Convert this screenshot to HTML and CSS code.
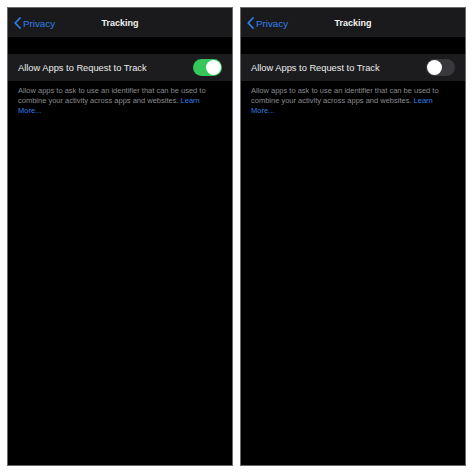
FILE: index.html
```html
<!DOCTYPE html>
<html>
<head>
<meta charset="utf-8">
<link rel="stylesheet" href="styles.css">
</head>
<body>
<div class="wrap">
  <div class="phone">
    <div class="nav">
      <div class="back">
        <svg class="chev" width="7" height="12" viewBox="0 0 7 12"><path d="M6 1 L1.2 6 L6 11" fill="none" stroke="#2f7fe6" stroke-width="1.8" stroke-linecap="round" stroke-linejoin="round"/></svg>
        <span>Privacy</span>
      </div>
      <div class="title">Tracking</div>
    </div>
    <div class="gap"></div>
    <div class="row">
      <span class="label">Allow Apps to Request to Track</span>
      <span class="toggle on"><span class="knob"></span></span>
    </div>
    <div class="footer">Allow apps to ask to use an identifier that can be used to combine your activity across apps and websites. <span class="link">Learn</span> <span class="link">More...</span></div>
  </div>
  <div class="phone">
    <div class="nav">
      <div class="back">
        <svg class="chev" width="7" height="12" viewBox="0 0 7 12"><path d="M6 1 L1.2 6 L6 11" fill="none" stroke="#2f7fe6" stroke-width="1.8" stroke-linecap="round" stroke-linejoin="round"/></svg>
        <span>Privacy</span>
      </div>
      <div class="title">Tracking</div>
    </div>
    <div class="gap"></div>
    <div class="row">
      <span class="label">Allow Apps to Request to Track</span>
      <span class="toggle off"><span class="knob"></span></span>
    </div>
    <div class="footer">Allow apps to ask to use an identifier that can be used to combine your activity across apps and websites. <span class="link">Learn</span> <span class="link">More...</span></div>
  </div>
</div>
</body>
</html>
```
FILE: styles.css
```css
html, body {
  margin: 0;
  padding: 0;
  background: #ffffff;
}
body {
  font-family: "Liberation Sans", Arial, sans-serif;
}
.wrap {
  display: flex;
  gap: 7px;
  padding: 7px 0 0 7px;
}
.phone {
  width: 224px;
  height: 457px;
  background: #000;
  border: 1px solid #6a6a6a;
  display: flex;
  flex-direction: column;
}
.nav {
  height: 29px;
  background: #1a1a1c;
  position: relative;
  display: flex;
  align-items: center;
  justify-content: center;
  padding-top: 1px;
  box-sizing: border-box;
}
.back {
  position: absolute;
  left: 6px;
  top: 9px;
  display: flex;
  align-items: center;
  gap: 2px;
  color: #2f7fe6;
  font-size: 9.8px;
}
.title {
  color: #f2f2f2;
  font-weight: bold;
  font-size: 9px;
}
.gap {
  height: 17px;
  background: #000;
}
.row {
  height: 27px;
  background: #1c1c1e;
  display: flex;
  align-items: center;
  justify-content: space-between;
  padding: 0 10px 0 10px;
}
.label {
  color: #ececec;
  font-size: 9.3px;
}
.toggle {
  width: 29px;
  height: 17px;
  border-radius: 9px;
  display: flex;
  align-items: center;
  padding: 0 1px;
  box-sizing: border-box;
}
.toggle.on {
  background: #34c759;
  justify-content: flex-end;
}
.toggle.off {
  background: #39393d;
  justify-content: flex-start;
}
.knob {
  width: 15px;
  height: 15px;
  border-radius: 50%;
  background: #fff;
}
.footer {
  background: #000;
  color: #8a8a8e;
  font-size: 7.5px;
  line-height: 10px;
  padding: 5px 0 6px 10px;
  width: 192px;
}
.link {
  color: #2f7fe6;
}
```
